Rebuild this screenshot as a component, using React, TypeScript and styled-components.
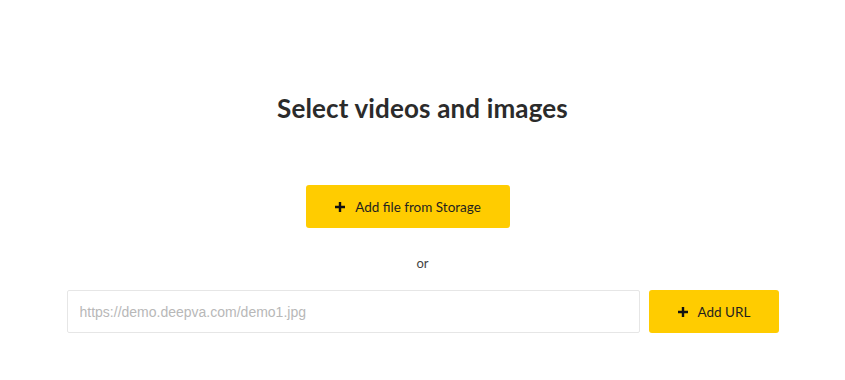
import styled, { createGlobalStyle } from "styled-components";

const GlobalStyle = createGlobalStyle`
  body {
    margin: 0;
    background: #fff;
    font-family: Lato, "Noto Sans", sans-serif;
    color: #222;
  }
`;

const Page = styled.main`
  width: 712px;
  margin: 0 auto;
  padding-top: 91px;
  display: flex;
  flex-direction: column;
  align-items: center;
`;

const Title = styled.h1`
  margin: 0;
  font-size: 26px;
  line-height: 34px;
  font-weight: 700;
  letter-spacing: 0.15px;
  color: #2b2b2b;
`;

const YellowButton = styled.button<{ $width: number }>`
  width: ${(p) => p.$width}px;
  height: 43px;
  border: none;
  border-radius: 3px;
  background: #ffcc00;
  color: #1f1f1f;
  font-family: Lato, "Noto Sans", sans-serif;
  font-size: 13.5px;
  display: flex;
  align-items: center;
  justify-content: center;
  gap: 9px;
  cursor: pointer;
  flex-shrink: 0;
`;

const StorageButton = styled(YellowButton)`
  margin-top: 60px;
  margin-right: 30px;
`;

const Or = styled.div`
  margin-top: 26px;
  font-size: 13px;
  line-height: 18px;
  color: #444;
`;

const UrlRow = styled.div`
  margin-top: 18px;
  width: 100%;
  display: flex;
  gap: 9px;
`;

const UrlInput = styled.input`
  flex: 1;
  height: 43px;
  box-sizing: border-box;
  border: 1px solid #e6e6e6;
  border-radius: 2px;
  padding: 0 12px;
  font-family: "Liberation Sans", Arial, sans-serif;
  font-size: 14px;
  color: #333;
  outline: none;

  &::placeholder {
    color: #b8b8b8;
  }
`;

function PlusIcon() {
  return (
    <svg width="12" height="12" viewBox="0 0 12 12" aria-hidden="true">
      <path d="M6 1v10M1 6h10" stroke="#111" strokeWidth="2.4" />
    </svg>
  );
}

export default function App() {
  return (
    <>
      <GlobalStyle />
      <Page>
        <Title>Select videos and images</Title>
        <StorageButton $width={204}>
          <PlusIcon />
          Add file from Storage
        </StorageButton>
        <Or>or</Or>
        <UrlRow>
          <UrlInput placeholder="https://demo.deepva.com/demo1.jpg" />
          <YellowButton $width={130}>
            <PlusIcon />
            Add URL
          </YellowButton>
        </UrlRow>
      </Page>
    </>
  );
}
